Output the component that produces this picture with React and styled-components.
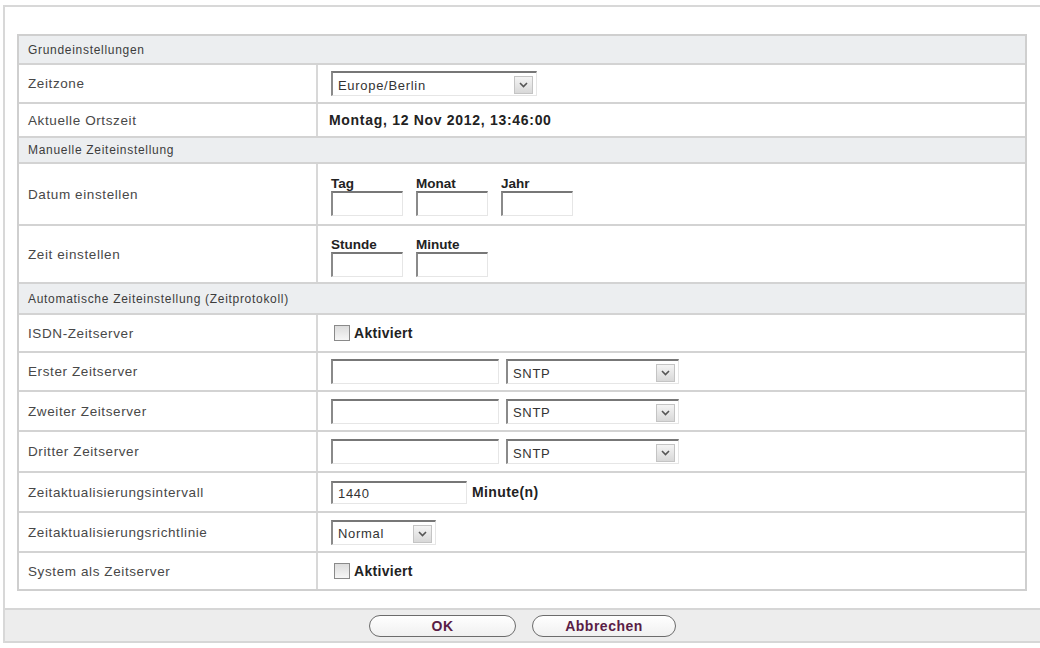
import React from 'react';
import styled, { createGlobalStyle } from 'styled-components';

const GlobalStyle = createGlobalStyle`
  html, body {
    margin: 0;
    padding: 0;
    background: #fff;
  }
  body {
    font-family: 'Liberation Sans', Arial, sans-serif;
    color: #3a3a3a;
  }
`;

const Frame = styled.div`
  margin: 5px 0 0 3px;
  border-top: 2px solid #d8d8d8;
  border-left: 2px solid #d8d8d8;
  height: 638px;
  box-sizing: border-box;
  display: flex;
  flex-direction: column;
`;

const Content = styled.div`
  padding: 27px 0 17px 12px;
`;

const Table = styled.div`
  width: 1010px;
  box-sizing: border-box;
  border: 2px solid #cfcfcf;
  display: flex;
  flex-direction: column;
`;

const SectionHead = styled.div`
  height: ${(p) => p.h}px;
  box-sizing: border-box;
  background: #eceef0;
  display: flex;
  align-items: center;
  padding-left: 9px;
  font-size: 12px;
  letter-spacing: 0.7px;
  color: #3c3c3c;
  & + & , * + & {
    border-top: 2px solid #d3d3d3;
  }
`;

const Row = styled.div`
  height: ${(p) => p.h}px;
  box-sizing: border-box;
  display: grid;
  grid-template-columns: 299px 1fr;
  border-top: 2px solid #d3d3d3;
`;

const Label = styled.div`
  display: flex;
  align-items: center;
  padding-left: 9px;
  font-size: 13.5px;
  letter-spacing: 0.6px;
  color: #484848;
  border-right: 2px solid #d8d8d8;
`;

const Value = styled.div`
  display: flex;
  align-items: center;
  gap: ${(p) => p.gap || 0}px;
  padding-left: 13px;
  padding-top: ${(p) => p.pt || 0}px;
`;

const Strong = styled.span`
  font-weight: bold;
  font-size: 14px;
  color: #222;
  letter-spacing: ${(p) => p.ls || 0}px;
  margin-left: ${(p) => p.ml || 0}px;
`;

const Input = styled.div`
  width: ${(p) => p.w}px;
  height: ${(p) => p.h || 25}px;
  box-sizing: border-box;
  background: #fff;
  border-top: 2px solid #777;
  border-left: 2px solid #8a8a8a;
  border-right: 1px solid #e6e6e6;
  border-bottom: 1px solid #e6e6e6;
  font-size: 13px;
  color: #333;
  padding: 2px 0 0 5px;
  letter-spacing: 0.7px;
  display: flex;
  align-items: center;
`;

const SelectBox = styled(Input)`
  justify-content: space-between;
  padding-right: 3px;
  margin-left: ${(p) => p.ml || 0}px;
`;

const Arrow = styled.span`
  width: 19px;
  height: 18px;
  box-sizing: border-box;
  border: 1px solid #c4c4c4;
  background: linear-gradient(#f4f4f4, #d8d8d8);
  display: flex;
  align-items: center;
  justify-content: center;
`;

const Field = styled.div`
  display: flex;
  flex-direction: column;
`;

const FieldLabel = styled.span`
  font-weight: bold;
  font-size: 13.5px;
  color: #222;
  height: 15px;
  line-height: 15px;
`;

const Check = styled.span`
  width: 16px;
  height: 16px;
  box-sizing: border-box;
  border: 1px solid #8a8a8a;
  background: linear-gradient(#dcdcdc, #f6f6f6);
  margin: 0 4px 0 3px;
`;

const Footer = styled.div`
  height: 38px;
  box-sizing: border-box;
  background: #ededed;
  border-top: 2px solid #d6d6d6;
  border-bottom: 2px solid #d6d6d6;
  display: flex;
  align-items: center;
  justify-content: center;
  gap: 16px;
`;

const PillButton = styled.button`
  width: ${(p) => p.w}px;
  height: 22px;
  border: 1px solid #6c6c6c;
  border-radius: 11px;
  background: linear-gradient(#ffffff, #f0f0f0);
  font-family: 'Liberation Sans', Arial, sans-serif;
  font-weight: bold;
  font-size: 14px;
  color: #5a1d46;
  letter-spacing: 0.5px;
  padding: 0;
  cursor: pointer;
`;

const Chevron = () => (
  <svg width="9" height="6" viewBox="0 0 9 6">
    <path d="M1 1 L4.5 4.5 L8 1" fill="none" stroke="#555" strokeWidth="1.6" />
  </svg>
);

const Select = ({ w, value, ml }) => (
  <SelectBox w={w} ml={ml}>
    <span>{value}</span>
    <Arrow>
      <Chevron />
    </Arrow>
  </SelectBox>
);

const Checkbox = ({ text }) => (
  <>
    <Check />
    <Strong ls={0.3}>{text}</Strong>
  </>
);

const ServerRow = ({ label, h }) => (
  <Row h={h}>
    <Label>{label}</Label>
    <Value>
      <Input w={168} />
      <Select w={173} value="SNTP" ml={7} />
    </Value>
  </Row>
);

export default function App() {
  return (
    <>
      <GlobalStyle />
      <Frame>
        <Content>
          <Table>
            <SectionHead h={27}>Grundeinstellungen</SectionHead>
            <Row h={39}>
              <Label>Zeitzone</Label>
              <Value>
                <Select w={206} value="Europe/Berlin" />
              </Value>
            </Row>
            <Row h={34}>
              <Label>Aktuelle Ortszeit</Label>
              <Value>
                <Strong ls={0.7} ml={-2}>Montag, 12 Nov 2012, 13:46:00</Strong>
              </Value>
            </Row>

            <SectionHead h={26}>Manuelle Zeiteinstellung</SectionHead>
            <Row h={62}>
              <Label>Datum einstellen</Label>
              <Value gap={13} pt={4}>
                <Field>
                  <FieldLabel>Tag</FieldLabel>
                  <Input w={72} />
                </Field>
                <Field>
                  <FieldLabel>Monat</FieldLabel>
                  <Input w={72} />
                </Field>
                <Field>
                  <FieldLabel>Jahr</FieldLabel>
                  <Input w={72} />
                </Field>
              </Value>
            </Row>
            <Row h={58}>
              <Label>Zeit einstellen</Label>
              <Value gap={13} pt={6}>
                <Field>
                  <FieldLabel>Stunde</FieldLabel>
                  <Input w={72} />
                </Field>
                <Field>
                  <FieldLabel>Minute</FieldLabel>
                  <Input w={72} />
                </Field>
              </Value>
            </Row>

            <SectionHead h={31}>Automatische Zeiteinstellung (Zeitprotokoll)</SectionHead>
            <Row h={38}>
              <Label>ISDN-Zeitserver</Label>
              <Value>
                <Checkbox text="Aktiviert" />
              </Value>
            </Row>
            <ServerRow label="Erster Zeitserver" h={39} />
            <ServerRow label="Zweiter Zeitserver" h={40} />
            <ServerRow label="Dritter Zeitserver" h={41} />
            <Row h={40}>
              <Label>Zeitaktualisierungsintervall</Label>
              <Value>
                <Input w={136} h={23}>1440</Input>
                <Strong ml={5} ls={0.4}>Minute(n)</Strong>
              </Value>
            </Row>
            <Row h={40}>
              <Label>Zeitaktualisierungsrichtlinie</Label>
              <Value>
                <Select w={105} value="Normal" />
              </Value>
            </Row>
            <Row h={38}>
              <Label>System als Zeitserver</Label>
              <Value>
                <Checkbox text="Aktiviert" />
              </Value>
            </Row>
          </Table>
        </Content>
        <Footer>
          <PillButton w={147}>OK</PillButton>
          <PillButton w={144}>Abbrechen</PillButton>
        </Footer>
      </Frame>
    </>
  );
}
